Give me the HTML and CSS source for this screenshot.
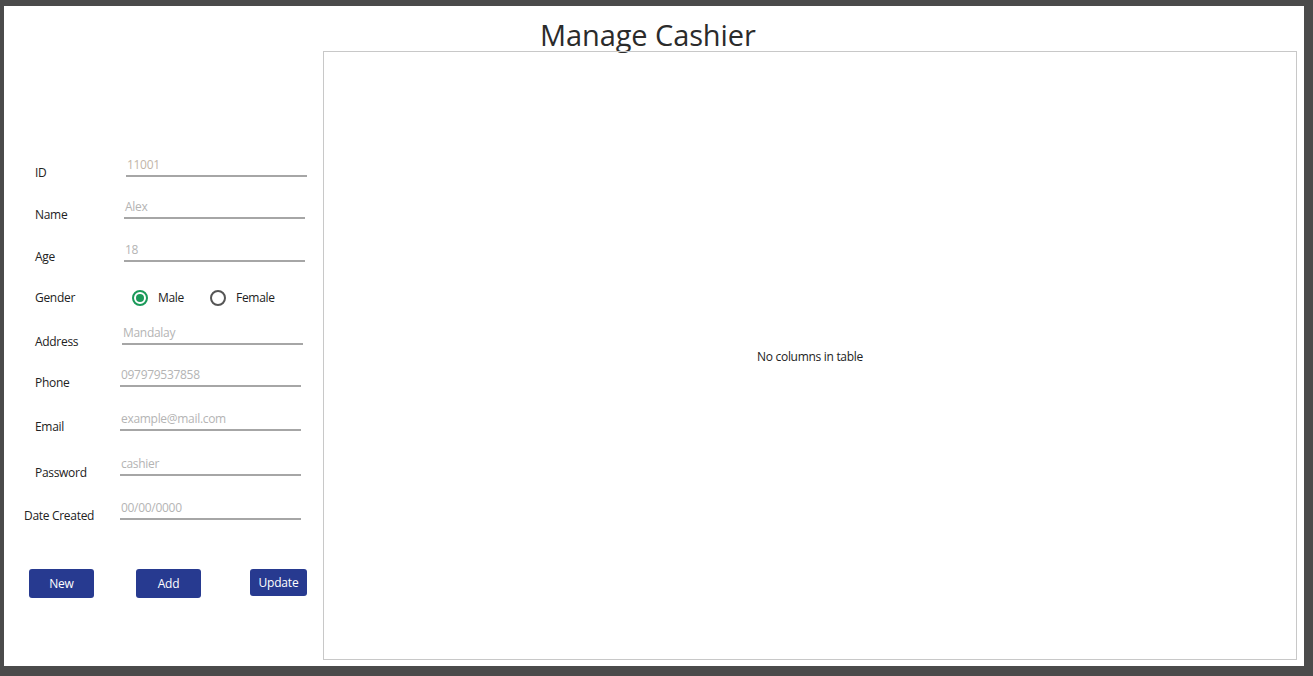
FILE: index.html
```html
<!DOCTYPE html>
<html>
<head>
<meta charset="utf-8">
<title>Manage Cashier</title>
<link rel="stylesheet" href="styles.css">
</head>
<body>
<div class="window">
  <header class="header">
    <h1 class="title">Manage Cashier</h1>
  </header>
  <main class="main">
    <section class="form-panel">
      <div class="row row-id">
        <span class="label">ID</span>
        <div class="field shift-6"><span class="ph ph-warm">11001</span></div>
      </div>
      <div class="row">
        <span class="label">Name</span>
        <div class="field shift-4"><span class="ph">Alex</span></div>
      </div>
      <div class="row row-43">
        <span class="label label-high">Age</span>
        <div class="field shift-4"><span class="ph">18</span></div>
      </div>
      <div class="row row-gender">
        <span class="label">Gender</span>
        <div class="radios">
          <label class="radio"><span class="dot checked"></span><span>Male</span></label>
          <label class="radio"><span class="dot"></span><span>Female</span></label>
        </div>
      </div>
      <div class="row row-39">
        <span class="label label-low">Address</span>
        <div class="field shift-2"><span class="ph">Mandalay</span></div>
      </div>
      <div class="row">
        <span class="label">Phone</span>
        <div class="field"><span class="ph">097979537858</span></div>
      </div>
      <div class="row row-44">
        <span class="label">Email</span>
        <div class="field"><span class="ph">example@mail.com</span></div>
      </div>
      <div class="row row-45">
        <span class="label label-low">Password</span>
        <div class="field"><span class="ph">cashier</span></div>
      </div>
      <div class="row row-44">
        <span class="label label-wide">Date Created</span>
        <div class="field"><span class="ph">00/00/0000</span></div>
      </div>
      <div class="buttons">
        <button class="btn">New</button>
        <button class="btn btn-add">Add</button>
        <button class="btn btn-update">Update</button>
      </div>
    </section>
    <section class="table-panel">
      <span class="empty">No columns in table</span>
    </section>
  </main>
</div>
</body>
</html>
```

FILE: styles.css
```css
* { box-sizing: border-box; }

html, body {
  margin: 0;
  padding: 0;
  background: #4b4b4b;
  height: 676px;
  overflow: hidden;
}

body {
  font-family: "Open Sans", "Noto Sans", sans-serif;
  font-size: 12px;
  letter-spacing: -0.3px;
  color: #222;
}

.window {
  margin: 6px 9px 0 4px;
  width: 1300px;
  height: 660px;
  background: #fff;
  display: flex;
  flex-direction: column;
}

.header {
  height: 45px;
  padding-left: 536px;
  overflow: visible;
}

.title {
  margin: 0;
  padding-top: 6px;
  font-weight: 400;
  font-size: 29px;
  line-height: 45px;
  height: 45px;
  color: #2b2b2b;
  letter-spacing: -0.1px;
}

.main {
  display: flex;
  flex: 1;
}

.form-panel {
  width: 319px;
  padding-top: 82px;
  display: flex;
  flex-direction: column;
}

.row {
  display: flex;
  align-items: flex-end;
  height: 42px;
  padding-left: 31px;
}

.row-id { height: 44px; }
.row-43 { height: 43px; }
.row-39 { height: 39px; }
.row-44 { height: 44px; }
.row-45 { height: 45px; }

.label {
  width: 85px;
  line-height: 18px;
  margin-bottom: -5px;
  white-space: nowrap;
}

.label-high { margin-bottom: -4px; }
.label-low { margin-bottom: -6px; }
.label-wide { margin-left: -11px; width: 96px; }

.field {
  width: 181px;
  height: 20px;
  border-bottom: 2px solid #a6a6a6;
  padding: 0 0 3px 1px;
  line-height: 15px;
}

.shift-2 { margin-left: 2px; }
.shift-4 { margin-left: 4px; }
.shift-6 { margin-left: 6px; }

.ph {
  color: #b4b4b4;
  font-size: 12px;
}

.ph-warm { color: #c2b5a8; }

.row-gender {
  height: 44px;
  align-items: center;
  padding-top: 27px;
}

.row-gender .label { margin-bottom: 0; }

.radios {
  display: flex;
  align-items: center;
  margin-left: 12px;
}

.radio {
  display: flex;
  align-items: center;
  gap: 10px;
  margin-right: 26px;
}

.dot {
  width: 16px;
  height: 16px;
  border-radius: 50%;
  border: 2px solid #555;
  position: relative;
}

.dot.checked {
  border-color: #1b9a5a;
}

.dot.checked::after {
  content: "";
  position: absolute;
  left: 2px;
  top: 2px;
  width: 8px;
  height: 8px;
  border-radius: 50%;
  background: #1b9a5a;
}

.buttons {
  display: flex;
  align-items: flex-start;
  padding-left: 25px;
  margin-top: 49px;
}

.btn {
  width: 65px;
  height: 29px;
  border: none;
  border-radius: 3px;
  background: #273a90;
  color: #fff;
  font-family: inherit;
  font-size: 12px;
  letter-spacing: -0.2px;
  padding: 0;
}

.btn-add { margin-left: 42px; }
.btn-update { margin-left: 49px; width: 57px; height: 27px; }

.table-panel {
  width: 974px;
  height: 609px;
  border: 1px solid #c8c8c8;
  display: flex;
  align-items: center;
  justify-content: center;
}

.empty {
  color: #222;
  font-size: 12px;
  margin-top: 2px;
}
```
